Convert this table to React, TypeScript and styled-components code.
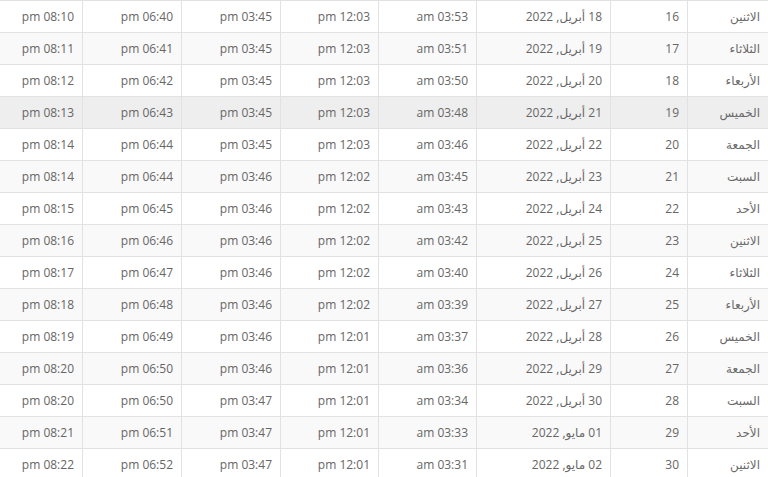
import React from "react";
import styled, {createGlobalStyle} from "styled-components";

const Global = createGlobalStyle`
  html, body {
    margin: 0;
    padding: 0;
    background: #fff;
  }
  body {
    font-family: "Open Sans", "DejaVu Sans", sans-serif;
    overflow: hidden;
  }
`

const Table = styled.table`
  width: 768px;
  table-layout: fixed;
  border-collapse: separate;
  border-spacing: 0;
  border-top: 1px solid #e2e2e2;
  direction: rtl;
  font-size: 12px;
  color: #666;
`

const Row = styled.tr<{$striped: boolean; $hover: boolean}>`
  background: ${p => (p.$hover ? "#eeeeee" : p.$striped ? "#f9f9f9" : "#ffffff")};
`

const Cell = styled.td`
  height: 31px;
  padding: 0 8px;
  text-align: right;
  vertical-align: middle;
  white-space: nowrap;
  border-bottom: 1px solid #e2e2e2;
  border-left: 1px solid #e2e2e2;
  &:last-child {
    border-left: none;
  }
`

const DayCell = styled(Cell)`
  font-family: "DejaVu Sans", "Open Sans", sans-serif;
  font-size: 12px;
  color: #6a6a6a;
`

const widths = [81, 77, 134, 98, 98, 99, 99, 82]

type Day = {
    name: string
    num: number
    date: string
    fajr: string
    dhuhr: string
    asr: string
    maghrib: string
    isha: string
}

const days: Day[] = [
    {name: "الاثنين", num: 16, date: "18 أبريل, 2022", fajr: "03:53", dhuhr: "12:03", asr: "03:45", maghrib: "06:40", isha: "08:10"},
    {name: "الثلاثاء", num: 17, date: "19 أبريل, 2022", fajr: "03:51", dhuhr: "12:03", asr: "03:45", maghrib: "06:41", isha: "08:11"},
    {name: "الأربعاء", num: 18, date: "20 أبريل, 2022", fajr: "03:50", dhuhr: "12:03", asr: "03:45", maghrib: "06:42", isha: "08:12"},
    {name: "الخميس", num: 19, date: "21 أبريل, 2022", fajr: "03:48", dhuhr: "12:03", asr: "03:45", maghrib: "06:43", isha: "08:13"},
    {name: "الجمعة", num: 20, date: "22 أبريل, 2022", fajr: "03:46", dhuhr: "12:03", asr: "03:45", maghrib: "06:44", isha: "08:14"},
    {name: "السبت", num: 21, date: "23 أبريل, 2022", fajr: "03:45", dhuhr: "12:02", asr: "03:46", maghrib: "06:44", isha: "08:14"},
    {name: "الأحد", num: 22, date: "24 أبريل, 2022", fajr: "03:43", dhuhr: "12:02", asr: "03:46", maghrib: "06:45", isha: "08:15"},
    {name: "الاثنين", num: 23, date: "25 أبريل, 2022", fajr: "03:42", dhuhr: "12:02", asr: "03:46", maghrib: "06:46", isha: "08:16"},
    {name: "الثلاثاء", num: 24, date: "26 أبريل, 2022", fajr: "03:40", dhuhr: "12:02", asr: "03:46", maghrib: "06:47", isha: "08:17"},
    {name: "الأربعاء", num: 25, date: "27 أبريل, 2022", fajr: "03:39", dhuhr: "12:02", asr: "03:46", maghrib: "06:48", isha: "08:18"},
    {name: "الخميس", num: 26, date: "28 أبريل, 2022", fajr: "03:37", dhuhr: "12:01", asr: "03:46", maghrib: "06:49", isha: "08:19"},
    {name: "الجمعة", num: 27, date: "29 أبريل, 2022", fajr: "03:36", dhuhr: "12:01", asr: "03:46", maghrib: "06:50", isha: "08:20"},
    {name: "السبت", num: 28, date: "30 أبريل, 2022", fajr: "03:34", dhuhr: "12:01", asr: "03:47", maghrib: "06:50", isha: "08:20"},
    {name: "الأحد", num: 29, date: "01 مايو, 2022", fajr: "03:33", dhuhr: "12:01", asr: "03:47", maghrib: "06:51", isha: "08:21"},
    {name: "الاثنين", num: 30, date: "02 مايو, 2022", fajr: "03:31", dhuhr: "12:01", asr: "03:47", maghrib: "06:52", isha: "08:22"},
]

export default function App() {
    return (
        <>
            <Global/>
            <Table>
                <colgroup>
                    {widths.map((w, i) => <col key={i} style={{width: w}}/>)}
                </colgroup>
                <tbody>
                {days.map((d, i) =>
                    <Row key={d.num} $striped={i % 2 === 1} $hover={d.num === 19}>
                        <DayCell>{d.name}</DayCell>
                        <Cell>{d.num}</Cell>
                        <Cell>{d.date}</Cell>
                        <Cell>{d.fajr} am</Cell>
                        <Cell>{d.dhuhr} pm</Cell>
                        <Cell>{d.asr} pm</Cell>
                        <Cell>{d.maghrib} pm</Cell>
                        <Cell>{d.isha} pm</Cell>
                    </Row>
                )}
                </tbody>
            </Table>
        </>
    );
}
